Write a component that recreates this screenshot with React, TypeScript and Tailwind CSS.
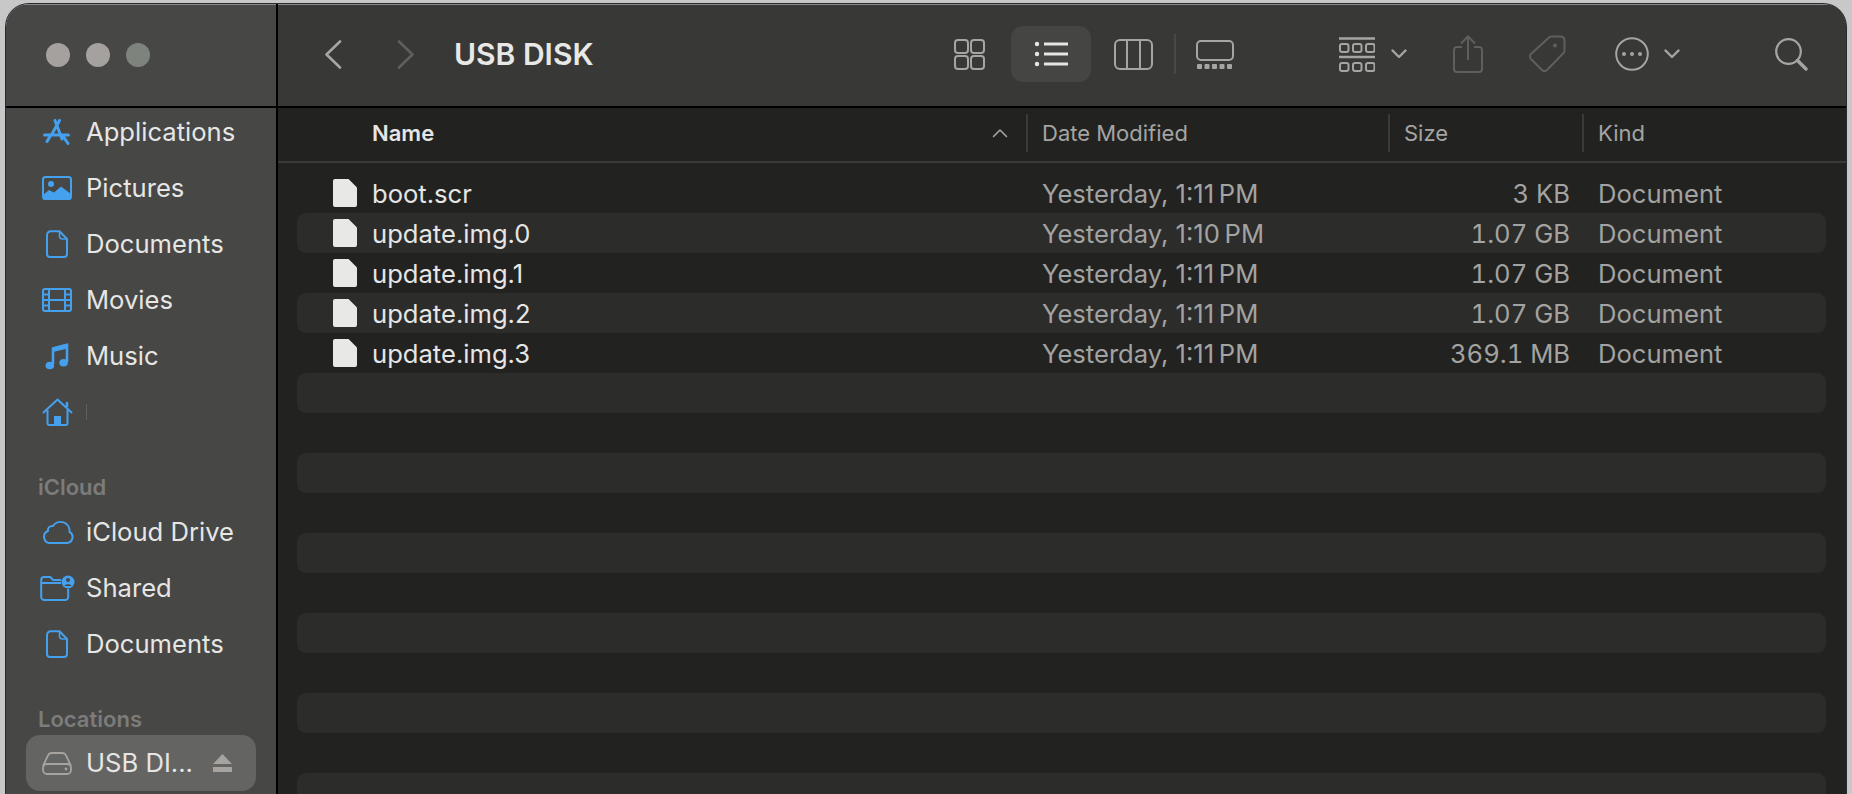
import React from "react";

const blue = "#45a0ee";

const Svg = ({ w, h, className = "", children }: { w: number; h: number; className?: string; children: React.ReactNode }) => (
  <svg width={w} height={h} viewBox={`0 0 ${w} ${h}`} fill="none" className={className}>
    {children}
  </svg>
);

const DocOutline = () => (
  <Svg w={22} h={28}>
    <path d="M5 1.200h8.500L21 9v15a3 3 0 0 1-3 3H4a3 3 0 0 1-3-3V5a3.800 3.800 0 0 1 4-3.800Z" stroke={blue} strokeWidth="2" />
    <path d="M13.500 1.200V6a3 3 0 0 0 3 3H21" stroke={blue} strokeWidth="1.600" />
  </Svg>
);

const AppIcon = () => (
  <Svg w={28} h={26}>
    <path d="M12 1.500 19 20M16.500 1.500 9 15M4 22.500l3-5" stroke={blue} strokeWidth="3" strokeLinecap="round" />
    <path d="M1.500 16h24" stroke={blue} strokeWidth="3" strokeLinecap="round" />
    <path d="m20 17 5 7.500" stroke={blue} strokeWidth="3" strokeLinecap="round" />
  </Svg>
);

const PicIcon = () => (
  <Svg w={30} h={24}>
    <rect x="1" y="1" width="28" height="22" rx="2.500" stroke={blue} strokeWidth="2" />
    <circle cx="9" cy="8" r="3" fill={blue} />
    <path d="M1 23v-4l6-5 5 2.500 7-6 10 7.500v5.500H1Z" fill={blue} />
  </Svg>
);

const MovieIcon = () => (
  <Svg w={30} h={24}>
    <rect x="1" y="1" width="28" height="22" rx="2" stroke={blue} strokeWidth="2" />
    <path d="M7 1v22M23 1v22M7 12h16M1 6.500h6M1 12h6M1 17.500h6M23 6.500h6M23 12h6M23 17.500h6" stroke={blue} strokeWidth="2" />
  </Svg>
);

const MusicIcon = () => (
  <Svg w={24} h={28}>
    <path d="M8 22V6.500L22 3v17" stroke={blue} strokeWidth="2.600" />
    <path d="M8 5.200 22.800 1.500v5L8 10Z" fill={blue} />
    <ellipse cx="4.800" cy="23.500" rx="4.300" ry="3.800" fill={blue} />
    <ellipse cx="18.600" cy="20.800" rx="4.300" ry="3.800" fill={blue} />
  </Svg>
);

const HomeIcon = () => (
  <Svg w={31} h={28}>
    <path d="M1.500 14.500 15.500 1.500l14 13" stroke={blue} strokeWidth="2" strokeLinecap="round" strokeLinejoin="round" />
    <path d="M5.500 12v13a2 2 0 0 0 2 2h16a2 2 0 0 0 2-2V12" stroke={blue} strokeWidth="2" />
    <path d="M12 27v-9h7v9Z" fill={blue} />
    <path d="M25 9V4" stroke={blue} strokeWidth="2.500" />
  </Svg>
);

const CloudIcon = () => (
  <Svg w={33} h={24}>
    <path d="M8 23H26A6 6 0 0 0 28.500 11.800A9 9 0 0 0 12 6A4.200 4.200 0 0 0 7 11A6.300 6.300 0 0 0 8 23Z" stroke={blue} strokeWidth="2" strokeLinejoin="round" />
  </Svg>
);

const SharedIcon = () => (
  <Svg w={35} h={26}>
    <path d="M21 8H1.200V5a3 3 0 0 1 3-3h6l3 3h8M1.200 8v14a3 3 0 0 0 3 3h21a3 3 0 0 0 3-3V14" stroke={blue} strokeWidth="2" />
    <circle cx="28" cy="7" r="6.500" fill={blue} />
    <circle cx="28" cy="5" r="2" fill="#474746" />
    <path d="M24.500 11c.5-2.500 6.500-2.500 7 0Z" fill="#474746" />
  </Svg>
);

const DriveIcon = () => (
  <Svg w={30} h={23}>
    <path d="M1 14 6 3.500A4 4 0 0 1 9.500 1h11A4 4 0 0 1 24 3.500L29 14" stroke="#a7a39f" strokeWidth="1.800" />
    <rect x="1" y="12" width="28" height="10" rx="4" stroke="#a7a39f" strokeWidth="1.800" />
    <circle cx="24" cy="17" r="1.400" fill="#a7a39f" />
  </Svg>
);

const EjectIcon = () => (
  <Svg w={19} h={18}>
    <path d="M9.500 0 19 10H0Z" fill="#a7a39f" />
    <rect y="13" width="19" height="5" fill="#a7a39f" />
  </Svg>
);

const SideRow = ({ icon, label }: { icon: React.ReactNode; label: string }) => (
  <div className="flex h-[56px] items-center pl-[31px]">
    <div className="flex w-[49px] shrink-0 justify-center pr-[9px]">{icon}</div>
    <span className="text-[25.6px] leading-none text-[#e6e6e5]">{label}</span>
  </div>
);

const SideHead = ({ label, className }: { label: string; className: string }) => (
  <div className={`pl-[32px] text-[22px] font-semibold leading-none text-[#7c7c7b] ${className}`}>{label}</div>
);

const Sidebar = () => (
  <aside className="flex w-[272px] shrink-0 flex-col overflow-hidden border-r-2 border-black bg-[#474746]">
    <div className="flex h-[104px] shrink-0 items-start gap-[16px] border-b-2 border-t border-b-black border-t-[#8a8a88] pl-[40px] pt-[38px]">
      <span className="h-[24px] w-[24px] rounded-full bg-[#a5a19f]" />
      <span className="h-[24px] w-[24px] rounded-full bg-[#a5a19f]" />
      <span className="h-[24px] w-[24px] rounded-full bg-[#7f837d]" />
    </div>
    <div className="-mt-[4px]">
      <SideRow icon={<AppIcon />} label="Applications" />
      <SideRow icon={<PicIcon />} label="Pictures" />
      <SideRow icon={<DocOutline />} label="Documents" />
      <SideRow icon={<MovieIcon />} label="Movies" />
      <SideRow icon={<MusicIcon />} label="Music" />
      <div className="flex h-[56px] items-center pl-[31px]">
        <div className="flex w-[49px] shrink-0 justify-center pr-[9px]"><HomeIcon /></div>
        <div className="h-[16px] w-px bg-[#5f5f5e]" />
      </div>
      <SideHead label="iCloud" className="mt-[36px] mb-[6px]" />
      <SideRow icon={<CloudIcon />} label="iCloud Drive" />
      <SideRow icon={<SharedIcon />} label="Shared" />
      <SideRow icon={<DocOutline />} label="Documents" />
      <SideHead label="Locations" className="mt-[36px] mb-[5px]" />
      <div className="mx-[20px] flex h-[56px] items-center rounded-[14px] bg-[#646463] pl-[11px] pr-[24px]">
        <div className="flex w-[49px] shrink-0 justify-center pr-[9px]"><DriveIcon /></div>
        <span className="flex-1 text-[25.6px] leading-none text-[#e6e6e5]">USB DI...</span>
        <EjectIcon />
      </div>
    </div>
  </aside>
);

const stroke = "#a5a5a3";
const dim = "#5f5f5e";

const GridIcon = () => (
  <Svg w={31} h={31}>
    {[[1, 1], [17, 1], [1, 17], [17, 17]].map(([x, y]) => (
      <rect key={`${x}-${y}`} x={x} y={y} width="13" height="13" rx="3" stroke={stroke} strokeWidth="2" />
    ))}
  </Svg>
);

const ListIcon = () => (
  <Svg w={34} h={26}>
    {[3, 13, 23].map((y) => (
      <g key={y}>
        <circle cx="3" cy={y} r="2.200" fill="#e6e6e5" />
        <rect x="10" y={y - 1.5} width="24" height="3" fill="#e6e6e5" />
      </g>
    ))}
  </Svg>
);

const ColumnsIcon = () => (
  <Svg w={39} h={31}>
    <rect x="1" y="1" width="37" height="29" rx="5" stroke={stroke} strokeWidth="2" />
    <path d="M13 1v29M26 1v29" stroke={stroke} strokeWidth="2" />
  </Svg>
);

const GalleryIcon = () => (
  <Svg w={38} h={29}>
    <rect x="1" y="1" width="36" height="19" rx="4" stroke={stroke} strokeWidth="2" />
    {[0, 7.5, 15, 22.5, 30].map((x) => (
      <rect key={x} x={x + 1} y="24" width="5" height="5" rx="1" fill={stroke} />
    ))}
  </Svg>
);

const GroupIcon = () => (
  <Svg w={36} h={35}>
    <path d="M0 1.500h36M0 20h36" stroke={stroke} strokeWidth="2.400" />
    {[0, 13, 26].flatMap((x) =>
      [7, 26].map((y) => <rect key={`${x}-${y}`} x={x + 1} y={y} width="8.5" height="8" rx="2" stroke={stroke} strokeWidth="2" />),
    )}
  </Svg>
);

const Chevron = () => (
  <Svg w={16} h={10}>
    <path d="m1.500 1.500 6.500 6.500 6.500-6.500" stroke={stroke} strokeWidth="2.400" strokeLinecap="round" strokeLinejoin="round" />
  </Svg>
);

const ShareIcon = () => (
  <Svg w={30} h={38}>
    <path d="M9 12H4a3 3 0 0 0-3 3v19a3 3 0 0 0 3 3h22a3 3 0 0 0 3-3V15a3 3 0 0 0-3-3h-5" stroke={dim} strokeWidth="2" />
    <path d="M15 25V2M8 8.500 15 1.500l7 7" stroke={dim} strokeWidth="2" />
  </Svg>
);

const TagIcon = () => (
  <Svg w={38} h={38}>
    <path d="M24 1.500h9a4 4 0 0 1 3.500 3.500v10a4 4 0 0 1-1 3L19 35a3.500 3.500 0 0 1-5 0L3 24a3.500 3.500 0 0 1 0-5L21 2.500a4 4 0 0 1 3-1Z" stroke={dim} strokeWidth="2" />
    <circle cx="27" cy="10.500" r="2" fill={dim} />
  </Svg>
);

const MoreIcon = () => (
  <Svg w={34} h={34}>
    <circle cx="17" cy="17" r="15.800" stroke={stroke} strokeWidth="2" />
    {[9, 17, 25].map((x) => <circle key={x} cx={x} cy="17" r="2" fill={stroke} />)}
  </Svg>
);

const SearchIcon = () => (
  <Svg w={33} h={33}>
    <circle cx="13.500" cy="13.500" r="12.300" stroke={stroke} strokeWidth="2.200" />
    <path d="m22.500 22.500 8.500 8.500" stroke={stroke} strokeWidth="3.400" strokeLinecap="round" />
  </Svg>
);

const Toolbar = () => (
  <header className="flex h-[104px] shrink-0 items-center border-b-2 border-t border-b-black border-t-[#8a8a88] bg-[#383837] pb-[3px]">
    <Svg w={18} h={29} className="ml-[46px]">
      <path d="M16 1.500 2.500 14.500 16 27.500" stroke={stroke} strokeWidth="2.600" strokeLinecap="round" strokeLinejoin="round" />
    </Svg>
    <Svg w={18} h={29} className="ml-[55px]">
      <path d="M2 1.500 15.500 14.500 2 27.500" stroke={dim} strokeWidth="2.600" strokeLinecap="round" strokeLinejoin="round" />
    </Svg>
    <h1 className="mb-[1px] ml-[39px] w-[500px] whitespace-nowrap text-[30px] font-semibold leading-none text-[#e8e8e7]">USB DISK</h1>
    <GridIcon />
    <div className="ml-[26px] flex h-[56px] w-[80px] items-center justify-center rounded-[12px] bg-[#454544]"><ListIcon /></div>
    <div className="ml-[23px]"><ColumnsIcon /></div>
    <div className="ml-[21px] h-[40px] w-[2px] bg-[#484847]" />
    <div className="ml-[20px]"><GalleryIcon /></div>
    <div className="ml-[105px]"><GroupIcon /></div>
    <div className="ml-[16px]"><Chevron /></div>
    <div className="ml-[46px]"><ShareIcon /></div>
    <div className="ml-[45px]"><TagIcon /></div>
    <div className="ml-[49px]"><MoreIcon /></div>
    <div className="ml-[15px]"><Chevron /></div>
    <div className="ml-[95px]"><SearchIcon /></div>
  </header>
);

const HeaderBar = () => (
  <div className="flex h-[55px] shrink-0 items-center border-b-2 border-[#3a3a39] bg-[#222221] pb-[4px] text-[22px] leading-none text-[#a5a5a3]">
    <span className="w-[714px] shrink-0 pl-[94px] font-semibold text-[#e6e6e5]">Name</span>
    <Svg w={16} h={10} className="shrink-0">
      <path d="m1.500 8.500 6.500-6.500 6.500 6.500" stroke="#a5a5a3" strokeWidth="1.600" strokeLinecap="round" strokeLinejoin="round" />
    </Svg>
    <div className="ml-[18px] h-[38px] w-[2px] shrink-0 bg-[#3a3a39]" />
    <span className="w-[360px] shrink-0 pl-[14px]">Date Modified</span>
    <div className="h-[38px] w-[2px] shrink-0 bg-[#3a3a39]" />
    <span className="w-[192px] shrink-0 pl-[14px]">Size</span>
    <div className="h-[38px] w-[2px] shrink-0 bg-[#3a3a39]" />
    <span className="pl-[14px]">Kind</span>
  </div>
);

const FileIcon = () => (
  <Svg w={24} h={28}>
    <path d="M2 0h13.500L24 8.500V26a2 2 0 0 1-2 2H2a2 2 0 0 1-2-2V2a2 2 0 0 1 2-2Z" fill="#e8e8e7" />
  </Svg>
);

const files = [
  { name: "boot.scr", date: "Yesterday, 1:11\u2009PM", size: "3 KB" },
  { name: "update.img.0", date: "Yesterday, 1:10\u2009PM", size: "1.07 GB" },
  { name: "update.img.1", date: "Yesterday, 1:11\u2009PM", size: "1.07 GB" },
  { name: "update.img.2", date: "Yesterday, 1:11\u2009PM", size: "1.07 GB" },
  { name: "update.img.3", date: "Yesterday, 1:11\u2009PM", size: "369.1 MB" },
];

const Row = ({ index, file }: { index: number; file?: (typeof files)[number] }) => (
  <div className={`flex h-[40px] shrink-0 items-center rounded-[9px] text-[25.6px] leading-none ${index % 2 === 1 ? "bg-[#2c2c2b]" : ""}`}>
    {file && (
      <>
        <div className="flex w-[745px] shrink-0 items-center gap-[15px] pl-[36px]">
          <FileIcon />
          <span className="pt-[1px] text-[#e6e6e5]">{file.name}</span>
        </div>
        <span className="w-[328px] shrink-0 whitespace-nowrap pt-[1px] text-[#a3a3a1]">{file.date}</span>
        <span className="w-[200px] shrink-0 whitespace-nowrap pt-[1px] text-right tabular-nums text-[#a3a3a1]">{file.size}</span>
        <span className="ml-[28px] pt-[1px] text-[#a3a3a1]">Document</span>
      </>
    )}
  </div>
);

export default function App() {
  return (
    <div className="h-[794px] w-[1852px] overflow-hidden bg-[#c8c8c8] pl-[5px] pr-[5px] pt-[3px] font-['Inter',sans-serif]">
      <div className="flex h-[791px] overflow-hidden rounded-t-[24px] border border-b-0 border-[#2a2a2a]">
        <Sidebar />
        <main className="flex min-w-0 flex-1 flex-col bg-[#222221]">
          <Toolbar />
          <HeaderBar />
          <div className="flex flex-col overflow-hidden pl-[19px] pr-[20px] pt-[10px]">
            {Array.from({ length: 16 }, (_, i) => (
              <Row key={i} index={i} file={files[i]} />
            ))}
          </div>
        </main>
      </div>
    </div>
  );
}
